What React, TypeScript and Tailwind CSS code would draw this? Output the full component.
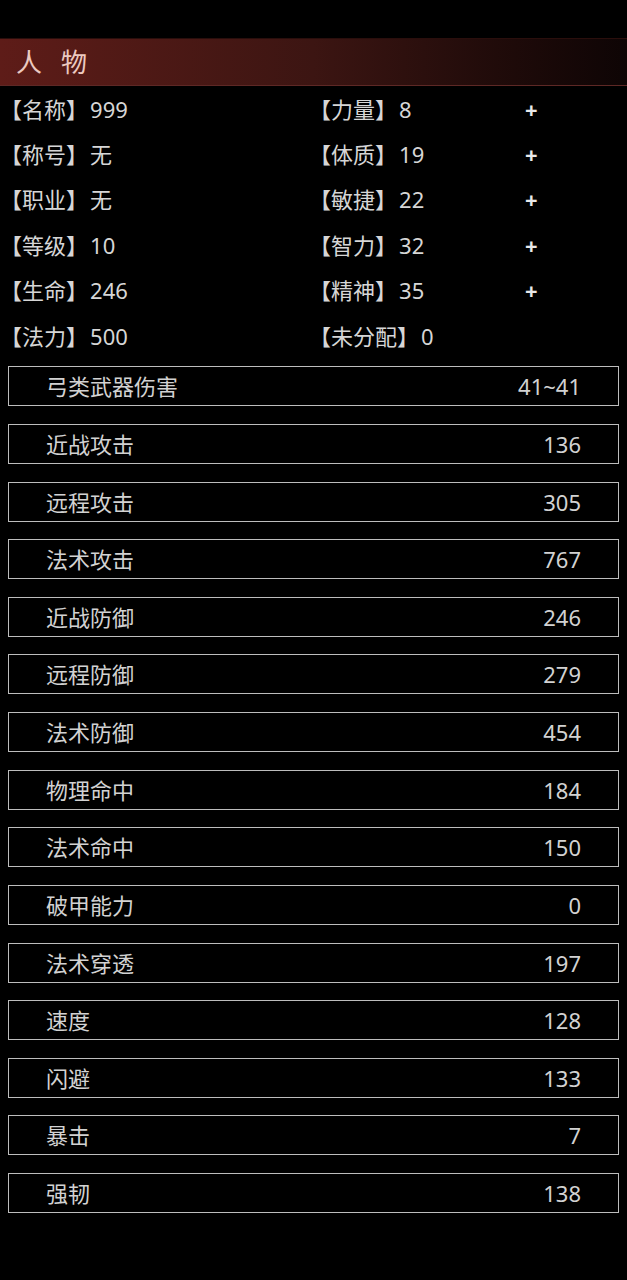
import React from "react";

const info: [string, string, string, string, boolean][] = [
  ["名称", "999", "力量", "8", true],
  ["称号", "无", "体质", "19", true],
  ["职业", "无", "敏捷", "22", true],
  ["等级", "10", "智力", "32", true],
  ["生命", "246", "精神", "35", true],
  ["法力", "500", "未分配", "0", false],
];

const stats: [string, string][] = [
  ["弓类武器伤害", "41~41"],
  ["近战攻击", "136"],
  ["远程攻击", "305"],
  ["法术攻击", "767"],
  ["近战防御", "246"],
  ["远程防御", "279"],
  ["法术防御", "454"],
  ["物理命中", "184"],
  ["法术命中", "150"],
  ["破甲能力", "0"],
  ["法术穿透", "197"],
  ["速度", "128"],
  ["闪避", "133"],
  ["暴击", "7"],
  ["强韧", "138"],
];

const font = { fontFamily: '"Noto Sans", "Noto Sans CJK SC", sans-serif' };

export default function App() {
  return (
    <div className="w-[627px] h-[1280px] bg-black overflow-hidden" style={font}>
      <div className="h-[38px]" />
      <div className="h-[48px] flex items-center pl-[16px] bg-gradient-to-r from-[#5e1c18] via-[#3c1512] to-[#0e0505] border-t border-t-[#2a0e0c] border-b border-b-[#5e2825]">
        <span className="text-[26px] leading-none text-[#ecc9c0] tracking-[19px]">人物</span>
      </div>
      <div className="flex flex-col">
        {info.map(([a, av, b, bv, plus]) => (
          <div key={a} className="h-[45.4px] flex items-center text-[22px] text-[#d6d6d6] leading-none">
            <div className="w-[309px]">
              【{a}】<span className="ml-[2px]">{av}</span>
            </div>
            <div className="w-[216px]">
              【{b}】<span className="ml-[2px]">{bv}</span>
            </div>
            {plus && <div className="font-bold text-[#e8e8e8]">+</div>}
          </div>
        ))}
      </div>
      <div className="flex flex-col gap-[17.64px] mt-[8px] px-[8px]">
        {stats.map(([k, v]) => (
          <div key={k} className="h-[40px] border border-[#bdbdbd] flex items-center justify-between pl-[37px] pr-[37px] text-[22px] text-[#d2d2d2] leading-none">
            <span>{k}</span>
            <span>{v}</span>
          </div>
        ))}
      </div>
    </div>
  );
}
